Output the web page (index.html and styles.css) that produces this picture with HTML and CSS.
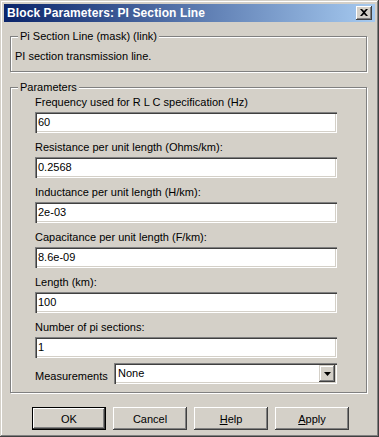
FILE: index.html
```html
<!DOCTYPE html>
<html>
<head>
<meta charset="utf-8">
<link rel="stylesheet" href="styles.css">
</head>
<body>
<div class="window">
  <div class="titlebar">
    <span class="title">Block Parameters: PI Section Line</span>
    <span class="close"><svg width="8" height="7" viewBox="0 0 8 7"><path d="M0 0h2l2 2 2-2h2L5 3.5 8 7H6L4 5 2 7H0l3-3.5z" fill="#000"/></svg></span>
  </div>
  <div class="group group-desc">
    <span class="legend">Pi Section Line (mask) (link)</span>
    <div class="desc">PI section transmission line.</div>
  </div>
  <div class="group group-params">
    <span class="legend">Parameters</span>
    <div class="row"><div class="label">Frequency used for R L C specification (Hz)</div><div class="field">60</div></div>
    <div class="row"><div class="label">Resistance per unit length (Ohms/km):</div><div class="field">0.2568</div></div>
    <div class="row"><div class="label">Inductance per unit length (H/km):</div><div class="field">2e-03</div></div>
    <div class="row"><div class="label">Capacitance per unit length (F/km):</div><div class="field">8.6e-09</div></div>
    <div class="row"><div class="label">Length (km):</div><div class="field">100</div></div>
    <div class="row"><div class="label">Number of pi sections:</div><div class="field">1</div></div>
    <div class="select-row">
      <span class="select-label">Measurements</span>
      <div class="select"><span class="select-value">None</span><span class="select-btn"><svg width="7" height="4" viewBox="0 0 7 4"><path d="M0 0h7L3.5 4z" fill="#000"/></svg></span></div>
    </div>
  </div>
  <div class="buttons">
    <div class="btn btn-default">OK</div>
    <div class="btn">Cancel</div>
    <div class="btn"><u>H</u>elp</div>
    <div class="btn"><u>A</u>pply</div>
  </div>
</div>
</body>
</html>
```
FILE: styles.css
```css
html, body {
  margin: 0;
  padding: 0;
  background: #D4D0C8;
}
.window {
  width: 379px;
  height: 437px;
  box-sizing: border-box;
  background: #D4D0C8;
  padding: 4px 4px 0 4px;
  font-family: "Liberation Sans", Arial, sans-serif;
  font-size: 11px;
  color: #000;
  box-shadow: inset -1px -1px #404040, inset 1px 1px #D4D0C8, inset -2px -2px #808080, inset 2px 2px #fff;
  overflow: hidden;
}
.titlebar {
  height: 18px;
  background: linear-gradient(to right, #0A246A, #A6CAF0);
  display: flex;
  align-items: center;
  justify-content: space-between;
  padding: 0 3px 0 3px;
}
.title {
  color: #fff;
  font-weight: bold;
  font-size: 12px;
  letter-spacing: 0.1px;
}
.close {
  width: 16px;
  height: 14px;
  box-sizing: border-box;
  background: #D4D0C8;
  box-shadow: inset -1px -1px #404040, inset 1px 1px #fff, inset -2px -2px #808080;
  display: flex;
  align-items: center;
  justify-content: center;
  padding-bottom: 1px;
}
.group {
  position: relative;
  margin-left: 6px;
  width: 357px;
  box-sizing: border-box;
  border: 1px solid #808080;
  box-shadow: inset 1px 1px #fff, 1px 1px #fff;
}
.legend {
  position: absolute;
  top: -8px;
  left: 7px;
  background: #D4D0C8;
  padding: 0 2px;
  line-height: 14px;
}
.group-desc {
  margin-top: 14px;
  height: 36px;
}
.desc {
  padding: 12px 0 0 4px;
  line-height: 14px;
}
.group-params {
  margin-top: 15px;
  height: 306px;
  padding: 7px 0 0 24px;
}
.row {
  margin-bottom: 7px;
}
.label {
  line-height: 14px;
  margin-bottom: 3px;
  white-space: nowrap;
}
.field {
  width: 302px;
  height: 21px;
  box-sizing: border-box;
  background: #fff;
  box-shadow: inset 1px 1px #808080, inset 2px 2px #404040, inset -1px -1px #fff, inset -2px -2px #D4D0C8;
  padding: 3px 0 0 3px;
  line-height: 15px;
}
.select-row {
  display: flex;
  align-items: center;
  margin-top: -2px;
}
.select-label {
  width: 79px;
  line-height: 14px;
  padding-top: 4px;
}
.select {
  width: 223px;
  height: 21px;
  box-sizing: border-box;
  background: #fff;
  box-shadow: inset 1px 1px #808080, inset 2px 2px #404040, inset -1px -1px #fff, inset -2px -2px #D4D0C8;
  display: flex;
  align-items: center;
  justify-content: space-between;
  padding: 2px;
}
.select-value {
  padding-left: 2px;
  line-height: 15px;
}
.select-btn {
  width: 16px;
  height: 17px;
  box-sizing: border-box;
  background: #D4D0C8;
  box-shadow: inset -1px -1px #404040, inset 1px 1px #D4D0C8, inset -2px -2px #808080, inset 2px 2px #fff;
  display: flex;
  align-items: center;
  justify-content: center;
}
.buttons {
  display: flex;
  gap: 7px;
  margin: 14px 0 0 28px;
}
.btn {
  width: 74px;
  height: 23px;
  box-sizing: border-box;
  background: #D4D0C8;
  box-shadow: inset -1px -1px #404040, inset 1px 1px #fff, inset -2px -2px #808080;
  display: flex;
  align-items: center;
  justify-content: center;
  font-size: 11px;
}
.btn u {
  text-decoration: underline;
  text-underline-offset: 1px;
}
.btn-default {
  box-shadow: inset 0 0 0 1px #000, inset -2px -2px #404040, inset 2px 2px #fff, inset -3px -3px #808080;
}
```
